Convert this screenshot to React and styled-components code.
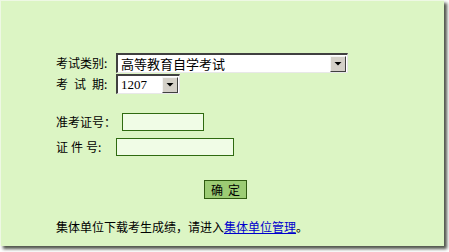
import React from "react";
import styled, { createGlobalStyle } from "styled-components";

const GlobalStyle = createGlobalStyle`
  body {
    margin: 0;
    background: #ffffff;
    font-family: "Noto Sans CJK SC", "Liberation Sans", sans-serif;
  }
`;

const Page = styled.div`
  width: 449px;
  height: 252px;
  overflow: hidden;
`;

const Panel = styled.div`
  width: 444px;
  height: 246px;
  box-sizing: border-box;
  background: #dcf5c4;
  border-top: 1px solid #eef8e4;
  border-left: 1px solid #eef8e4;
  box-shadow: 3px 3px 3px 0 rgba(50, 55, 45, 0.85);
  padding: 52px 0 0 55px;
  display: flex;
  flex-direction: column;
  font-size: 12px;
  color: #000;
`;

const Row = styled.div`
  display: flex;
  align-items: center;
  height: ${(p) => p.h || 20}px;
  margin-top: ${(p) => p.mt || 0}px;
`;

const Label = styled.div`
  width: ${(p) => p.w || 60}px;
  flex-shrink: 0;
  white-space: pre;
  line-height: 1;
`;

const Spaced = styled.span`
  letter-spacing: ${(p) => p.ls}px;
`;

const SelectBox = styled.div`
  width: ${(p) => p.w}px;
  height: 20px;
  box-sizing: border-box;
  display: flex;
  align-items: center;
  background: #fff;
  border-top: 2px solid #404040;
  border-left: 2px solid #404040;
  border-right: 1px solid #e8e8e8;
  border-bottom: 1px solid #e8e8e8;
`;

const SelectText = styled.div`
  flex: 1;
  padding-left: 3px;
  font-size: 13px;
  line-height: 1;
  font-family: ${(p) => (p.num ? '"Liberation Serif", serif' : "inherit")};
`;

const Arrow = styled.div`
  width: 16px;
  height: 16px;
  box-sizing: border-box;
  margin-right: 1px;
  background: #d4d0c8;
  border-top: 1px solid #f4f4f4;
  border-left: 1px solid #f4f4f4;
  border-right: 1px solid #404040;
  border-bottom: 1px solid #404040;
  display: flex;
  align-items: center;
  justify-content: center;
`;

const Input = styled.div`
  width: ${(p) => p.w}px;
  height: 18px;
  box-sizing: border-box;
  background: #f0fce6;
  border: 1px solid #2f6a10;
`;

const ButtonRow = styled.div`
  display: flex;
  margin-top: 24px;
  padding-left: 148px;
`;

const Button = styled.div`
  width: 43px;
  height: 19px;
  box-sizing: border-box;
  background: #9ccc74;
  border: 1px solid #2f5a10;
  display: flex;
  align-items: center;
  justify-content: center;
  font-size: 12px;
  letter-spacing: 5px;
  padding-left: 5px;
`;

const Footer = styled.div`
  margin-top: 22px;
  line-height: 1;
  font-size: 12px;
`;

const Link = styled.a`
  color: #0000cc;
  text-decoration: underline;
`;

const DownIcon = () => (
  <svg width="8" height="4" viewBox="0 0 8 4">
    <polygon points="0.5,0 7.5,0 4,3.5" fill="#000" />
  </svg>
);

export default function App() {
  return (
    <Page>
      <GlobalStyle />
      <Panel>
        <Row>
          <Label>考试类别:</Label>
          <SelectBox w={232}>
            <SelectText>高等教育自学考试</SelectText>
            <Arrow>
              <DownIcon />
            </Arrow>
          </SelectBox>
        </Row>
        <Row mt={1}>
          <Label>
            <Spaced ls={6}>考试</Spaced>期:
          </Label>
          <SelectBox w={64}>
            <SelectText num>1207</SelectText>
            <Arrow>
              <DownIcon />
            </Arrow>
          </SelectBox>
        </Row>
        <Row mt={19} h={18}>
          <Label w={66}>准考证号：</Label>
          <Input w={82} />
        </Row>
        <Row mt={7} h={18}>
          <Label>
            <Spaced ls={3}>证件</Spaced>号:
          </Label>
          <Input w={118} />
        </Row>
        <ButtonRow>
          <Button>确定</Button>
        </ButtonRow>
        <Footer>
          集体单位下载考生成绩，请进入<Link href="#">集体单位管理</Link>。
        </Footer>
      </Panel>
    </Page>
  );
}
